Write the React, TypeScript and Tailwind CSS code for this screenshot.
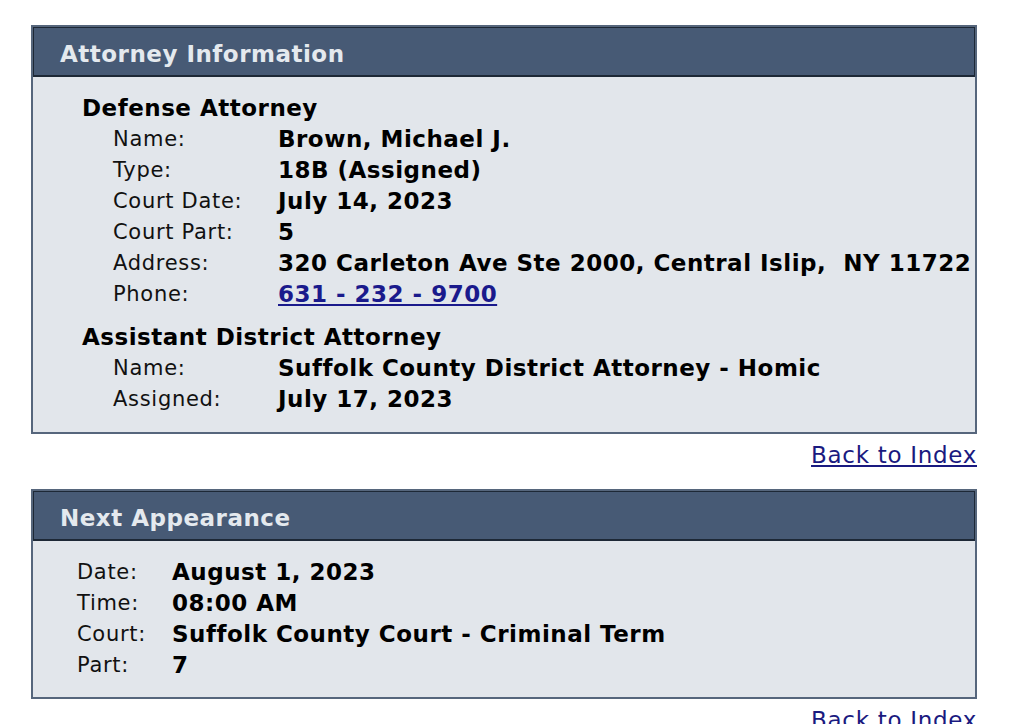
import React from 'react';

const font = { fontFamily: '"DejaVu Sans", Verdana, sans-serif' };

type Row = { label: string; value: React.ReactNode };

const defense: Row[] = [
  { label: 'Name:', value: 'Brown, Michael J.' },
  { label: 'Type:', value: '18B (Assigned)' },
  { label: 'Court Date:', value: 'July 14, 2023' },
  { label: 'Court Part:', value: '5' },
  { label: 'Address:', value: '320 Carleton Ave Ste 2000, Central Islip,\u00a0 NY 11722' },
  {
    label: 'Phone:',
    value: (
      <a href="#" className="text-[#1a1a8c] underline underline-offset-2">
        631 - 232 - 9700
      </a>
    ),
  },
];

const ada: Row[] = [
  { label: 'Name:', value: 'Suffolk County District Attorney - Homic' },
  { label: 'Assigned:', value: 'July 17, 2023' },
];

const appearance: Row[] = [
  { label: 'Date:', value: 'August 1, 2023' },
  { label: 'Time:', value: '08:00 AM' },
  { label: 'Court:', value: 'Suffolk County Court - Criminal Term' },
  { label: 'Part:', value: '7' },
];

function Panel({ title, children }: { title: string; children: React.ReactNode }) {
  return (
    <div className="border-2 border-[#56667c] bg-[#e2e6eb]">
      <div className="h-[50px] bg-[#475a75] border border-[#1d2836] border-b-2 flex items-center pt-[5px] pl-[26px] text-[23px] tracking-[0.5px] font-bold text-[#e4e9ee]">
        {title}
      </div>
      {children}
    </div>
  );
}

function Rows({ rows, labelW, indent }: { rows: Row[]; labelW: string; indent: string }) {
  return (
    <div className={indent}>
      {rows.map(r => (
        <div key={r.label} className="flex h-[31px] items-center">
          <div className={`${labelW} text-[21px] tracking-[0.7px] text-[#111]`}>{r.label}</div>
          <div className="text-[23px] tracking-[0.5px] font-bold text-black whitespace-nowrap">{r.value}</div>
        </div>
      ))}
    </div>
  );
}

function Heading({ children, className = '' }: { children: React.ReactNode; className?: string }) {
  return (
    <div className={`text-[23px] tracking-[0.5px] font-bold text-black h-[31px] flex items-center ${className}`}>
      {children}
    </div>
  );
}

function BackLink() {
  return (
    <div className="flex justify-end h-[55px] pt-[4px]">
      <a href="#" className="h-[28px] text-[23px] tracking-[0.7px] text-[#1a1a80] underline underline-offset-2">
        Back to Index
      </a>
    </div>
  );
}

export default function App() {
  return (
    <div className="bg-white min-h-screen overflow-hidden" style={font}>
      <div className="w-[946px] ml-[31px] pt-[25px]">
        <Panel title="Attorney Information">
          <div className="pl-[49px] pt-[16px] pb-[17px]">
            <Heading>Defense Attorney</Heading>
            <Rows rows={defense} labelW="w-[165px]" indent="pl-[31px]" />
            <Heading className="mt-[12px]">Assistant District Attorney</Heading>
            <Rows rows={ada} labelW="w-[165px]" indent="pl-[31px]" />
          </div>
        </Panel>
        <BackLink />
        <Panel title="Next Appearance">
          <div className="pl-[44px] pt-[16px] pb-[16px]">
            <Rows rows={appearance} labelW="w-[95px]" indent="" />
          </div>
        </Panel>
        <BackLink />
      </div>
    </div>
  );
}
